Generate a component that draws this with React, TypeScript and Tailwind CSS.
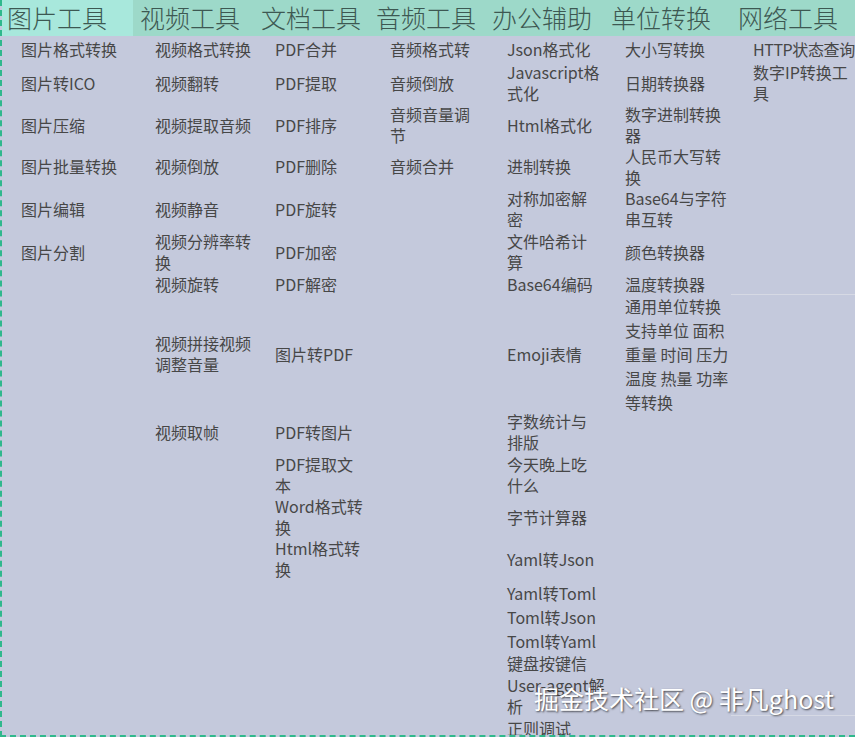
import React from 'react';

const HEADERS = ['图片工具', '视频工具', '文档工具', '音频工具', '办公辅助', '单位转换', '网络工具'];

// one array per column, one entry per body row ('' = empty cell, '\n' = line break)
const COLUMNS: string[][] = [
  ['图片格式转换', '图片转ICO', '图片压缩', '图片批量转换', '图片编辑', '图片分割'],
  [
    '视频格式转换', '视频翻转', '视频提取音频', '视频倒放', '视频静音',
    '视频分辨率转\n换', '视频旋转', '视频拼接视频\n调整音量', '视频取帧',
  ],
  [
    'PDF合并', 'PDF提取', 'PDF排序', 'PDF删除', 'PDF旋转', 'PDF加密', 'PDF解密',
    '图片转PDF', 'PDF转图片', 'PDF提取文\n本', 'Word格式转\n换', 'Html格式转\n换',
  ],
  ['音频格式转', '音频倒放', '音频音量调\n节', '音频合并'],
  [
    'Json格式化', 'Javascript格\n式化', 'Html格式化', '进制转换', '对称加密解\n密',
    '文件哈希计\n算', 'Base64编码', 'Emoji表情', '字数统计与\n排版', '今天晚上吃\n什么',
    '字节计算器', 'Yaml转Json', 'Yaml转Toml', 'Toml转Json', 'Toml转Yaml', '键盘按键信',
    'User-agent解\n析', '正则调试',
  ],
  [
    '大小写转换', '日期转换器', '数字进制转换\n器', '人民币大写转\n换', 'Base64与字符\n串互转',
    '颜色转换器', '温度转换器', '通用单位转换\n支持单位 面积\n重量 时间 压力\n温度 热量 功率\n等转换',
  ],
  ['HTTP状态查询', '数字IP转换工\n具'],
];

const ROW_COUNT = 18;
const HEADER_PAD = ['pl-[5px]', 'pl-[7px]', 'pl-[7px]', 'pl-[7px]', 'pl-[7px]', 'pl-[7px]', 'pl-[7px]'];
const BODY_PAD = ['pl-[19px]', 'pl-[22px]', 'pl-[21px]', 'pl-[21px]', 'pl-[22px]', 'pl-[21px]', 'pl-[22px]'];

const App: React.FC = () => {
  return (
    <div
      className="relative w-[855px] h-[737px] overflow-hidden bg-[#c4c9dc] border-l-2 border-b-2 border-dashed border-[#2fb88c] text-[#474747]"
      style={{ fontFamily: '"Noto Sans CJK SC", "Noto Sans", sans-serif' }}
    >
      <div className="grid grid-cols-[131px_121px_115px_116px_119px_127px_124px] grid-rows-[36px_26px_42px_42px_41px_44px_42px_22px_118px_38px_48px_36px_48px_20px_28px_20px_25px_40px_24px]">
        {/* Header row */}
        {HEADERS.map((h, i) => (
          <div
            key={h}
            className={`flex items-center whitespace-nowrap text-[25px] font-light text-[#3d5852] ${HEADER_PAD[i]} ${
              i === 0 ? 'bg-[#a8e8dc]' : 'bg-[#9dd9c9]'
            }`}
          >
            {h}
          </div>
        ))}

        {/* Body rows */}
        {Array.from({ length: ROW_COUNT }).map((_, r) =>
          COLUMNS.map((col, c) => {
            const text = col[r] || '';
            const tall = c === 5 && r === 7;
            const faintLine = c === 6 && (r === 6 || r === 16);
            const tight = c === 6 && r === 0;
            return (
              <div
                key={`${r}-${c}`}
                className={`flex items-center whitespace-pre text-[16px] ${tall ? 'leading-[24px]' : 'leading-[21px]'} ${BODY_PAD[c]} ${
                  faintLine ? 'border-b border-[#d6d9e4]' : ''
                } ${tight ? 'tracking-[-0.4px]' : ''}`}
              >
                {text && <span>{text}</span>}
              </div>
            );
          })
        )}
      </div>

      {/* Watermark */}
      <div className="absolute left-[532px] top-[680px] whitespace-nowrap text-[25px] text-white [text-shadow:1px_1px_2px_rgba(0,0,0,0.65)]">
        掘金技术社区 @ 非凡ghost
      </div>
    </div>
  );
};

export default App;
